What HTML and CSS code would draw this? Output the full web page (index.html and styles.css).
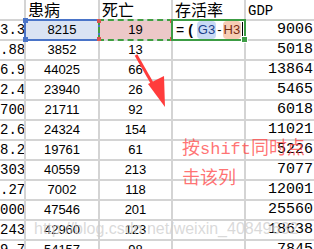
FILE: index.html
```html
<!DOCTYPE html>
<html>
<head>
<meta charset="utf-8">
<link rel="stylesheet" href="styles.css">
</head>
<body>
<div class="sheet">
  <div class="grid">
    <div class="c a"></div><div class="c h">患病</div><div class="c h">死亡</div><div class="c h">存活率</div><div class="c h gdp-h">GDP</div>

    <div class="c a">3.3</div><div class="c n selb">8215</div><div class="c n selr">19</div><div class="c f"><span class="eq">=</span><span class="par">(</span><span class="refb">G3</span><span class="minus">-</span><span class="refr">H3</span><span class="caret"></span></div><div class="c g">9006</div>
    <div class="c a">.88</div><div class="c n">3852</div><div class="c n">13</div><div class="c"></div><div class="c g">5018</div>
    <div class="c a">6.9</div><div class="c n">44025</div><div class="c n">66</div><div class="c"></div><div class="c g">13864</div>
    <div class="c a">2.4</div><div class="c n">23940</div><div class="c n">26</div><div class="c"></div><div class="c g">5465</div>
    <div class="c a">700</div><div class="c n">21711</div><div class="c n">92</div><div class="c"></div><div class="c g">6018</div>
    <div class="c a">2.6</div><div class="c n">24324</div><div class="c n">154</div><div class="c"></div><div class="c g">11021</div>
    <div class="c a">8.2</div><div class="c n">19761</div><div class="c n">61</div><div class="c"></div><div class="c g">5226</div>
    <div class="c a">303</div><div class="c n">40559</div><div class="c n">213</div><div class="c"></div><div class="c g">7077</div>
    <div class="c a">.27</div><div class="c n">7002</div><div class="c n">118</div><div class="c"></div><div class="c g">12001</div>
    <div class="c a">000</div><div class="c n">47546</div><div class="c n">201</div><div class="c"></div><div class="c g">25560</div>
    <div class="c a">243</div><div class="c n">42960</div><div class="c n">123</div><div class="c"></div><div class="c g">18638</div>
    <div class="c a">9.7</div><div class="c n">54157</div><div class="c n">98</div><div class="c"></div><div class="c g">7845</div>
  </div>

  <svg class="arrow" width="314" height="249" viewBox="0 0 314 249">
    <line x1="136" y1="55" x2="156" y2="90" stroke="#ff3c3c" stroke-width="3"/>
    <polygon points="148,84 164,76 165,107" fill="#ff3c3c"/>
  </svg>

  <div class="note">按<span class="lat">shift</span>同时点<br>击该列</div>
  <div class="wm">http://blog.csdn.net/weixin_40849632</div>
</div>
</body>
</html>
```

FILE: styles.css
```css
html, body {
  margin: 0;
  padding: 0;
  background: #fff;
}
.sheet {
  position: relative;
  width: 314px;
  height: 249px;
  overflow: hidden;
}
.grid {
  display: grid;
  grid-template-columns: 24px 72px 71px 71px 1fr;
  grid-template-rows: 19px repeat(12, 18px);
  gap: 2px;
  background: #d4d4d4;
  width: 314px;
}
.c {
  background: #fff;
  font-family: "Liberation Sans", Arial, sans-serif;
  font-size: 13px;
  color: #000;
  line-height: 18px;
  white-space: nowrap;
  position: relative;
}
.a {
  font-family: "Liberation Mono", monospace;
  font-size: 14px;
  text-align: right;
  overflow: hidden;
}
.h {
  font-family: "Noto Sans CJK SC", sans-serif;
  font-size: 16px;
  line-height: 18px;
  padding-left: 2px;
}
.gdp-h {
  font-family: "Liberation Mono", monospace;
  font-size: 14px;
  line-height: 23px;
}
.n {
  text-align: center;
}
.g {
  text-align: right;
  font-family: "Liberation Mono", monospace;
  font-size: 15px;
  padding-right: 1px;
}
.selb {
  background: #dae3f3;
  outline: 2px solid #4a74c8;
  z-index: 2;
}
.selb::before, .selb::after {
  content: "";
  position: absolute;
  left: -3px;
  width: 5px;
  height: 5px;
  background: #4a74c8;
}
.selb::before { top: -3px; }
.selb::after { bottom: -3px; }
.selr {
  background: #ecc8c8;
  outline: 2px dashed #3f9f3f;
  z-index: 2;
}
.selr::before, .selr::after {
  content: "";
  position: absolute;
  left: -3px;
  right: -3px;
  height: 4px;
  border-left: 4px solid #d9534f;
  border-right: 4px solid #d9534f;
}
.selr::before { top: -2px; }
.selr::after { bottom: -2px; }
.f {
  outline: 2px solid #3c9c44;
  z-index: 3;
  display: flex;
  align-items: center;
  padding-left: 3px;
  font-family: "Liberation Sans", sans-serif;
  font-size: 13px;
}
.f::after {
  content: "";
  position: absolute;
  right: -4px;
  bottom: -4px;
  width: 5px;
  height: 5px;
  background: #3c9c44;
  border: 1px solid #fff;
}
.eq { margin-right: 4px; font-size: 14px; }
.par { font-weight: bold; font-size: 14px; margin-right: 4px; }
.refb {
  background: #c9daf5;
  color: #1a3f8a;
  border-radius: 4px;
  padding: 0 1px;
}
.refr {
  background: #f7cdb5;
  color: #7a2a10;
  border-radius: 4px;
  padding: 0 1px;
}
.minus { margin: 0 1px; }
.caret {
  display: inline-block;
  width: 1px;
  height: 16px;
  background: #000;
  margin-left: 1px;
}
.arrow {
  position: absolute;
  left: 0;
  top: 0;
  pointer-events: none;
}
.note {
  position: absolute;
  left: 182px;
  top: 133px;
  font-family: "Noto Sans CJK SC", sans-serif;
  font-size: 18px;
  line-height: 26px;
  color: rgba(255, 70, 70, 0.75);
}
.lat {
  font-family: "Liberation Mono", monospace;
  font-size: 17px;
}
.wm {
  position: absolute;
  left: 34px;
  top: 220px;
  font-family: "Liberation Sans", Arial, sans-serif;
  font-size: 16px;
  color: rgba(205, 205, 205, 0.75);
  white-space: nowrap;
}
```
